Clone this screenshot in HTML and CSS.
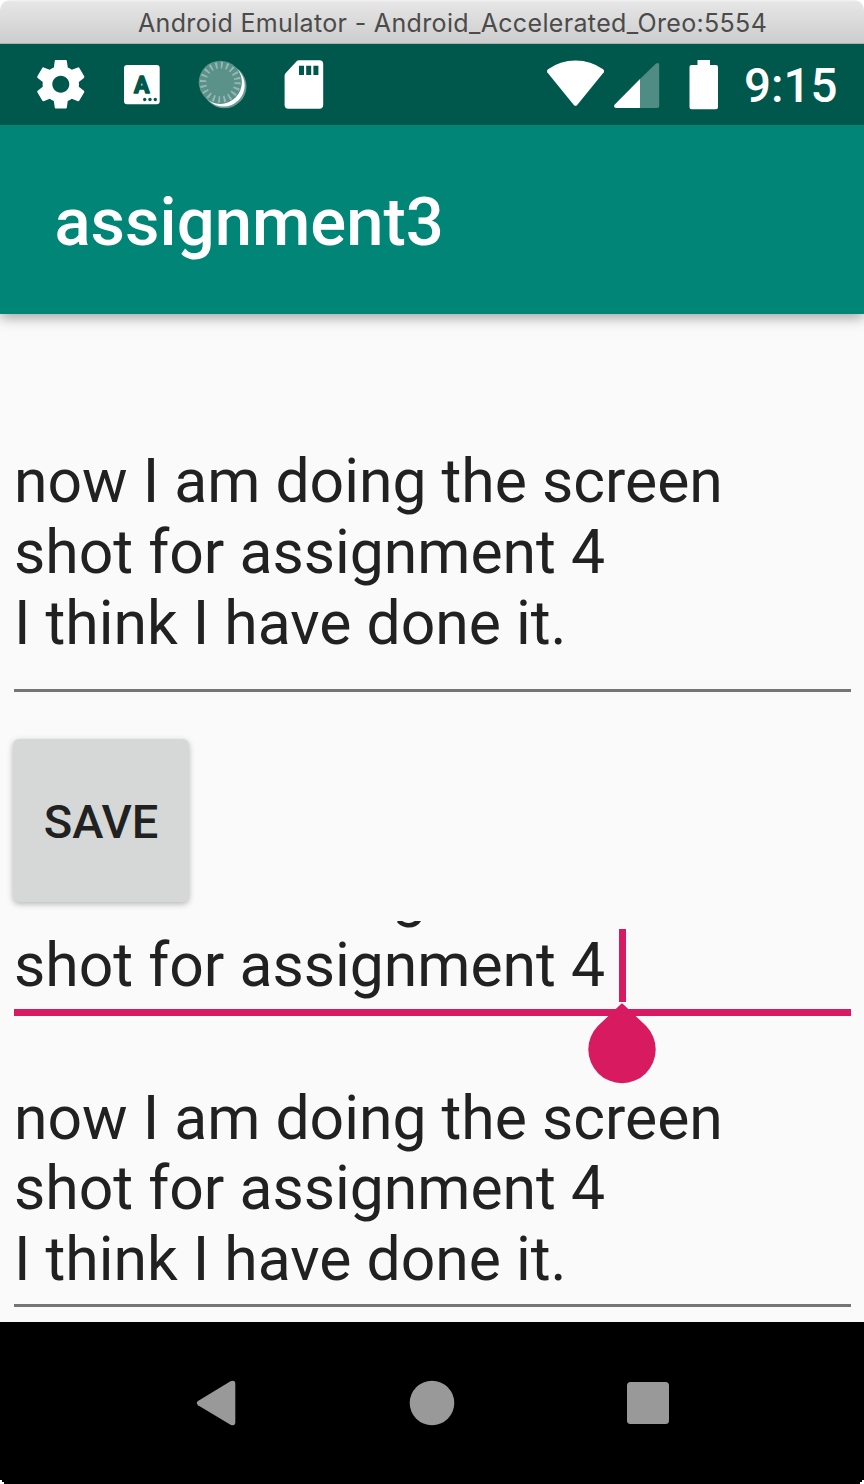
FILE: index.html
```html
<!DOCTYPE html>
<html lang="en">
<head>
<meta charset="utf-8">
<title>Android Emulator</title>
<link rel="stylesheet" href="styles.css">
</head>
<body>
<div class="window">
  <header class="titlebar"><span class="titlebar-text">Android Emulator - Android_Accelerated_Oreo:5554</span></header>
  <div class="statusbar">
    <svg class="status-icons" width="400" height="81" viewBox="0 44 400 81">
      <g transform="translate(31.7 55.2) scale(2.425)">
        <path fill="#fff" d="M19.43 12.98c.04-.32.07-.64.07-.98s-.03-.66-.07-.98l2.11-1.65c.19-.15.24-.42.12-.64l-2-3.46c-.12-.22-.39-.3-.61-.22l-2.49 1c-.52-.4-1.08-.73-1.69-.98l-.38-2.65C14.46 2.18 14.25 2 14 2h-4c-.25 0-.46.18-.49.42l-.38 2.65c-.61.25-1.17.59-1.69.98l-2.49-1c-.23-.09-.49 0-.61.22l-2 3.46c-.13.22-.07.49.12.64l2.11 1.65c-.04.32-.07.65-.07.98s.03.66.07.98l-2.11 1.65c-.19.15-.24.42-.12.64l2 3.46c.12.22.39.3.61.22l2.49-1c.52.4 1.08.73 1.69.98l.38 2.65c.03.24.24.42.49.42h4c.25 0 .46-.18.49-.42l.38-2.65c.61-.25 1.17-.59 1.69-.98l2.49 1c.23.09.49 0 .61-.22l2-3.46c.12-.22.07-.49-.12-.64l-2.11-1.65zM12 15.5c-1.93 0-3.5-1.57-3.5-3.5s1.57-3.5 3.5-3.5 3.5 1.57 3.5 3.5-1.57 3.5-3.5 3.5z"/>
      </g>
      <rect x="124" y="65" width="35.7" height="39.3" rx="3" fill="#fff"/>
      <text class="keyboard-letter" x="141.7" y="93" text-anchor="middle">A</text>
      <g fill="#00574b"><circle cx="144.7" cy="99.5" r="1.7"/><circle cx="150" cy="99.5" r="1.7"/><circle cx="155.3" cy="99.5" r="1.7"/></g>
      <circle cx="224.5" cy="86.3" r="22" fill="#fff" opacity=".4"/>
      <circle cx="223.5" cy="85.300" r="21.2" fill="#fff"/>
      <circle cx="220.3" cy="82.3" r="21.6" fill="#5a9189"/>
      <circle cx="220.3" cy="82.3" r="17.2" fill="none" stroke="#94b8b3" stroke-width="6.5" stroke-dasharray="1.9 3.504"/>
      <path fill="#fff" fill-rule="evenodd" d="M299 60.3H319.5a3.7 3.7 0 0 1 3.7 3.7V105a3.7 3.7 0 0 1-3.7 3.7H288.3a3.7 3.7 0 0 1-3.7-3.7V75.5Q284.6 74 285.7 72.9L296.4 61.4Q297.4 60.3 299 60.3ZM299 65.7V75h5v-9.3zM306.2 65.7V75h5v-9.3zM313.4 65.7V75h5v-9.3z"/>
    </svg>
    <svg class="signal-icons" width="180" height="81" viewBox="540 44 180 81">
      <path fill="#fff" d="M547.2 72.3Q546.3 70.6 548 69.2Q560 60.4 575.5 60.4T603.1 69.2Q604.8 70.6 603.8 72.3L577.2 104.9Q575.5 106.8 573.8 104.9Z"/>
      <path fill="#4f8c83" d="M640 79L655.7 63.8Q659.2 61.7 659.2 65.5V106Q659.2 108 657.2 108H640Z"/>
      <path fill="#fff" d="M640 79V108H616Q612.7 107.5 615 104.3Z"/>
      <path fill="#fff" d="M697.5 60H710V65H716Q718 65 718 67V107Q718 109.2 716 109.2H691.5Q689.5 109.2 689.5 107V67Q689.5 65 691.5 65H697.5Z"/>
    </svg>
    <span class="clock">9:15</span>
  </div>
  <div class="appbar"><h1 class="app-title">assignment3</h1></div>
  <main class="content">
    <div class="field field-first">
      <p class="lines">now I am doing the screen<br>shot for assignment 4<br>I think I have done it.</p>
    </div>
    <button class="save">SAVE</button>
    <div class="field field-active">
      <p class="lines">now I am doing the screen<br>shot for assignment 4</p>
      <span class="caret"></span>
    </div>
    <svg class="handle" width="70" height="82" viewBox="587 1002 70 82">
      <path fill="#d81b60" d="M620.5 1004.5Q622 1002.5 623.5 1004.5L646.2 1026A33.7 33.7 0 1 1 597.8 1026Z"/>
    </svg>
    <div class="field field-last">
      <p class="lines">now I am doing the screen<br>shot for assignment 4<br>I think I have done it.</p>
    </div>
  </main>
  <nav class="navbar">
    <svg width="864" height="162" viewBox="0 1322 864 162">
      <g fill="#999">
        <path d="M198 1401L230.5 1381.3Q235.3 1379.5 235.3 1384V1422.3Q235.3 1426.5 230.5 1424.7L198 1405.2Q195.5 1403 198 1401Z"/>
        <circle cx="432" cy="1403" r="22.3"/>
        <rect x="627" y="1382" width="42" height="42" rx="3.5"/>
      </g>
      <path fill="#fff" d="M0 1480H2V1482H4V1484H0ZM864 1480H862V1482H860V1484H864Z"/>
    </svg>
  </nav>
</div>
</body>
</html>
```
FILE: styles.css
```css
* { box-sizing: border-box; }

body {
  margin: 0;
  background: #fff;
  font-family: Roboto, sans-serif;
}

.window {
  display: flex;
  flex-direction: column;
  width: 864px;
  height: 1484px;
  overflow: hidden;
}

.titlebar {
  height: 44px;
  flex: none;
  padding-left: 138px;
  border-radius: 10px 10px 0 0;
  border-bottom: 1px solid #b0b0b0;
  background: linear-gradient(#f4f4f4 0, #e6e6e6 2px, #cdcdcd 43px);
}

.titlebar-text {
  font: 400 25px/46px Inter, sans-serif;
  letter-spacing: .34px;
  color: #4b4b4b;
  white-space: nowrap;
}

.statusbar {
  position: relative;
  z-index: 2;
  display: flex;
  height: 81px;
  flex: none;
  background: #00574b;
}

.status-icons { display: block; }

.signal-icons {
  display: block;
  margin-left: 140px;
}

.keyboard-letter {
  font: 700 23px Roboto, sans-serif;
  fill: #00574b;
  stroke: #00574b;
  stroke-width: 1.5px;
  stroke-linejoin: round;
}

.clock {
  margin-left: 24px;
  font-size: 47.5px;
  font-weight: 500;
  line-height: 85px;
  color: #fff;
}

.appbar {
  position: relative;
  z-index: 1;
  height: 189px;
  flex: none;
  padding: 58px 0 0 54.5px;
  background: #008577;
  box-shadow: 0 4px 12px rgba(0, 0, 0, .34);
}

.app-title {
  margin: 0;
  font-size: 67px;
  font-weight: 500;
  line-height: 78px;
  color: #fff;
}

.content {
  position: relative;
  z-index: 0;
  height: 1008px;
  flex: none;
  padding: 0 13.5px;
  overflow: hidden;
  background: #fafafa;
}

.lines {
  margin: 0;
  padding-left: .5px;
  font-size: 60.65px;
  line-height: 70.8px;
  color: #212121;
  white-space: nowrap;
}

.field-first {
  height: 378px;
  padding-top: 133px;
  border-bottom: 3px solid #757575;
}

.save {
  display: block;
  width: 176px;
  height: 163px;
  margin: 47px 0 19px -.5px;
  padding: 2px 0 0;
  border: 0;
  border-radius: 6px;
  background: #d6d8d7;
  box-shadow: 0 2px 6px rgba(0, 0, 0, .28);
  font: 500 47px Roboto, sans-serif;
  color: #212121;
}

.field-active {
  position: relative;
  display: flex;
  flex-direction: column;
  justify-content: flex-end;
  height: 95px;
  padding-bottom: 7px;
  border-bottom: 7px solid #d81b60;
  overflow: hidden;
}

.caret {
  position: absolute;
  left: 605.3px;
  top: 8px;
  width: 7px;
  height: 73px;
  background: #d81b60;
}

.handle {
  position: absolute;
  left: 587px;
  top: 688px;
}

.field-last {
  height: 291px;
  padding-top: 67.5px;
  border-bottom: 3px solid #757575;
}

.navbar {
  height: 162px;
  flex: none;
  background: #000;
}

.navbar svg { display: block; }
```
